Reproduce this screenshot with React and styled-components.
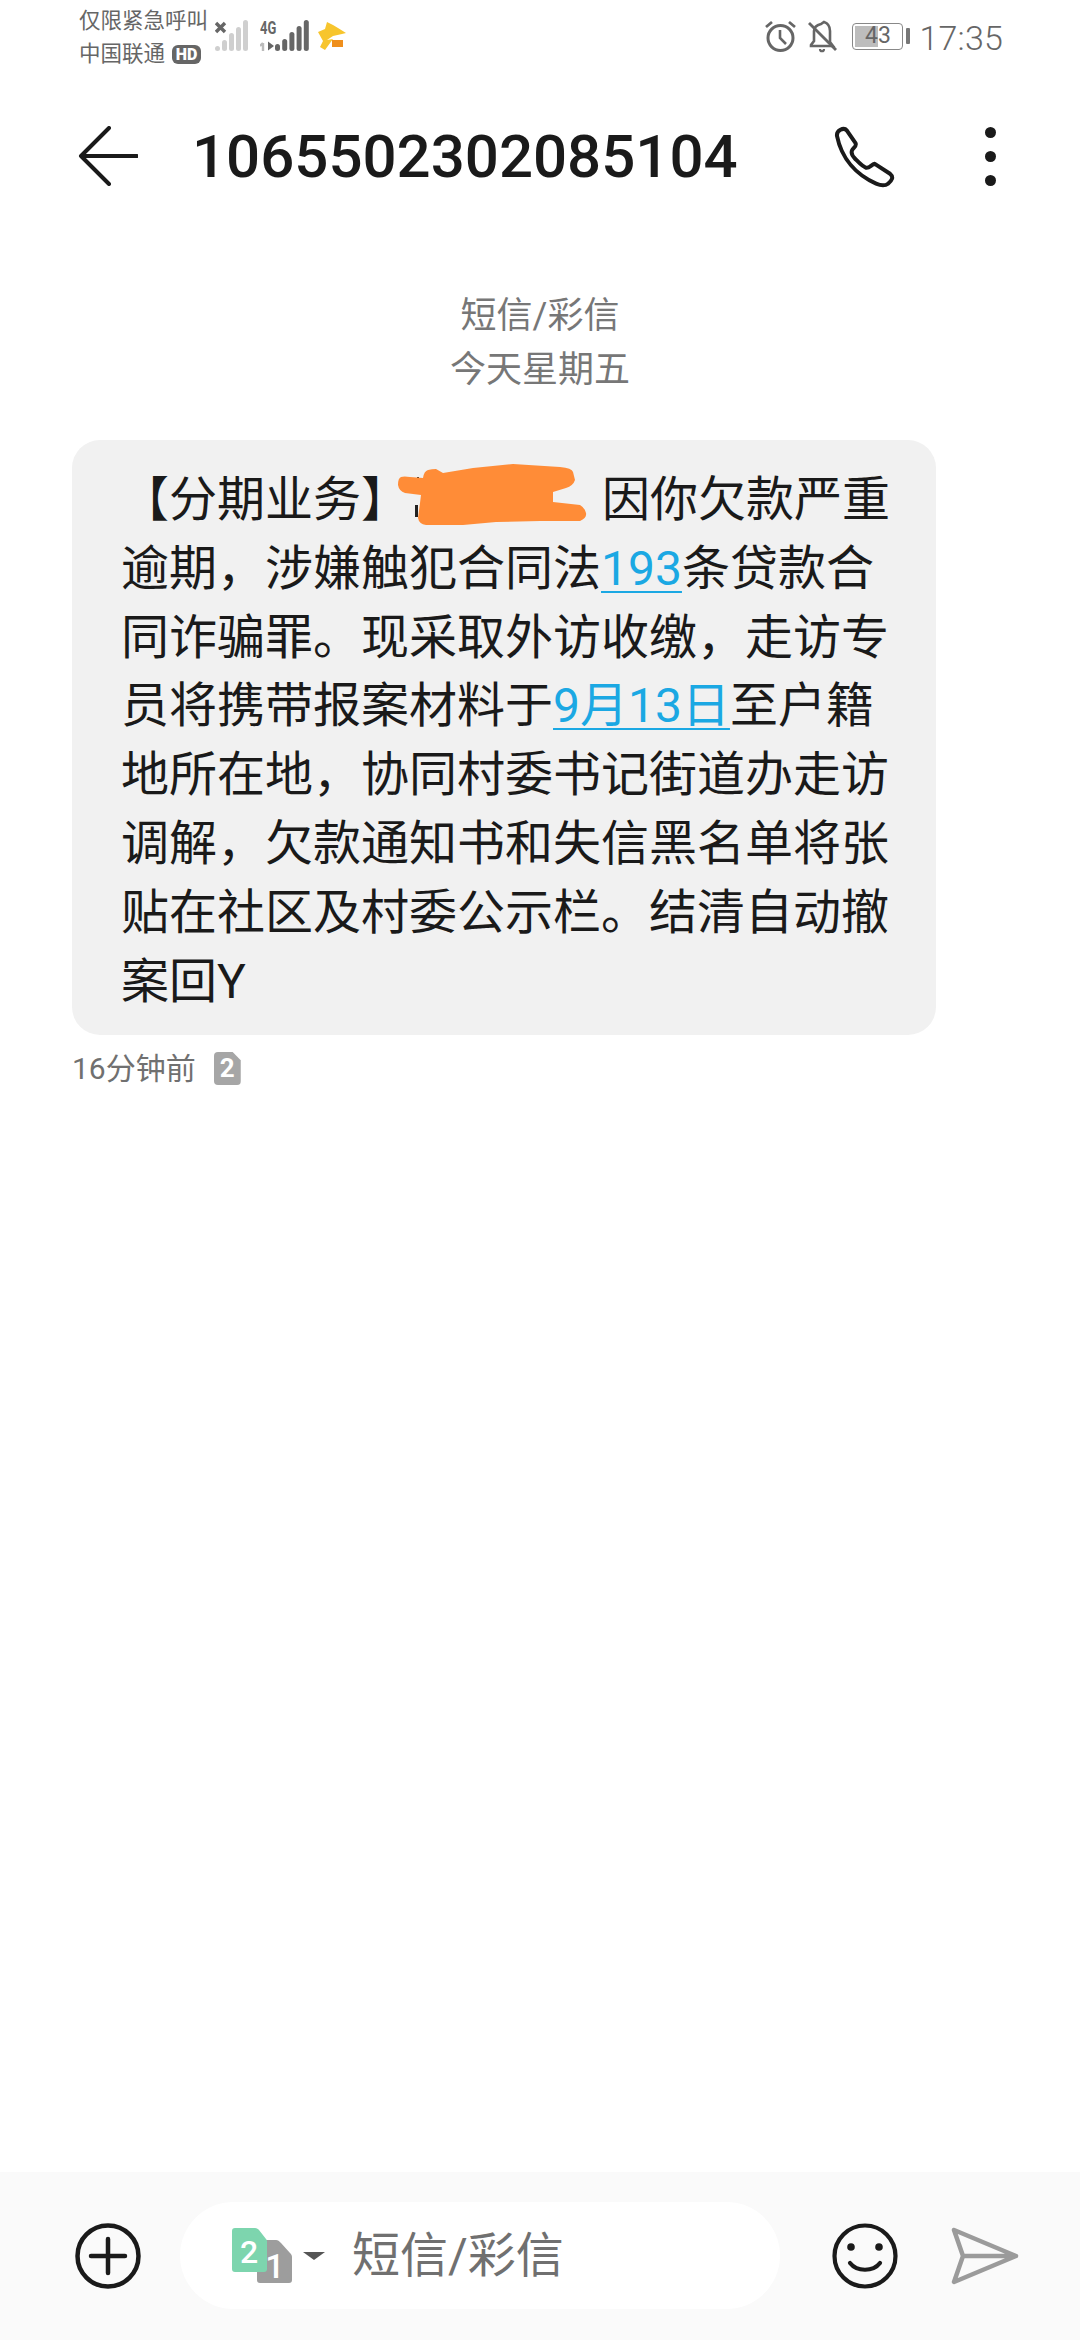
import React from 'react';
import styled, { createGlobalStyle } from 'styled-components';

const CJK = '"Roboto", "Noto Sans CJK SC", sans-serif';

const GlobalStyle = createGlobalStyle`
  html, body {
    margin: 0;
    padding: 0;
    background: #fff;
  }
  body {
    font-family: ${CJK};
  }
`;

const Screen = styled.div`
  width: 1080px;
  height: 2340px;
  display: flex;
  flex-direction: column;
  background: #fff;
  overflow: hidden;
`;

const StatusBar = styled.div`
  height: 72px;
  flex: none;
  display: flex;
  justify-content: space-between;
  padding: 0 77px 0 79px;
  color: #666;
`;

const StatusGroup = styled.div`
  display: flex;
  align-items: flex-start;
`;

const CarrierText = styled.div`
  font-size: 21.5px;
  line-height: 33px;
  padding-top: 4px;
  width: 136px;
  flex: none;
  white-space: nowrap;
`;

const HdBadge = styled.span`
  display: inline-block;
  vertical-align: 1px;
  margin-left: 7px;
  width: 29px;
  height: 19px;
  border-radius: 6px;
  background: #666;
  color: #fff;
  font-size: 16px;
  font-weight: 900;
  line-height: 19px;
  text-align: center;
`;

const StatusIcon = styled.svg`
  display: block;
  flex: none;
  margin-top: ${(p) => p.$top || 0}px;
  margin-left: ${(p) => p.$left || 0}px;
`;

const NetworkLabel = styled.div`
  width: 18px;
  margin: 19px 0 0 12px;
  flex: none;
  font-size: 18px;
  font-weight: 700;
  line-height: 18px;
  transform: scaleX(0.72);
  transform-origin: left top;
  white-space: nowrap;
`;

const Battery = styled.div`
  position: relative;
  flex: none;
  width: 51px;
  height: 27px;
  margin: 23px 0 0 14px;
  box-sizing: border-box;
  border: 1.5px solid #888;
  border-radius: 4px;
  font-size: 23px;
  line-height: 24px;
  text-align: center;
  overflow: hidden;
`;

const BatteryFill = styled.div`
  position: absolute;
  left: 2px;
  top: 2px;
  bottom: 2px;
  width: ${(p) => p.$level * 1.05}%;
  background: #bdbdbd;
`;

const BatteryValue = styled.span`
  position: relative;
`;

const BatteryTip = styled.div`
  flex: none;
  width: 4px;
  height: 16px;
  margin: 28px 0 0 3px;
  background: #777;
  border-radius: 1px;
`;

const Clock = styled.div`
  margin-left: 9px;
  font-size: 34px;
  font-weight: 300;
  line-height: 36px;
  padding-top: 20px;
  letter-spacing: 0.2px;
`;

const Header = styled.header`
  height: 168px;
  flex: none;
  display: flex;
  align-items: center;
  padding: 0 0 0 78px;
`;

const HeaderIcon = styled.svg`
  display: block;
  flex: none;
`;

const Title = styled.h1`
  flex: 1;
  margin: 2px 0 0 54px;
  color: #1a1a1a;
  font-size: 60px;
  font-weight: 500;
  line-height: 70px;
`;

const HeaderActions = styled.div`
  display: flex;
  align-items: center;
  gap: 89px;
  padding-right: 84px;
`;

const Dots = styled.div`
  display: flex;
  flex-direction: column;
  gap: 13px;
`;

const Dot = styled.span`
  display: block;
  width: 11px;
  height: 11px;
  border-radius: 50%;
  background: #1a1a1a;
`;

const Thread = styled.main`
  flex: 1;
  padding: 0 144px 0 72px;
`;

const DateBlock = styled.div`
  width: 1080px;
  margin: 49px 0 43px -72px;
  color: #777;
  font-size: 36px;
  line-height: 54px;
  text-align: center;
`;

const Bubble = styled.div`
  box-sizing: border-box;
  width: 864px;
  height: 595px;
  padding: 26px 0 0 49px;
  border-radius: 28px;
  background: #f1f1f1;
  color: #1a1a1a;
  font-size: 48px;
  line-height: 68.8px;
  white-space: nowrap;
`;

const MessageLink = styled.span`
  color: #1ba8e3;
  text-decoration: underline;
  text-decoration-thickness: 2px;
  text-underline-offset: 6px;
`;

const Redaction = styled.span`
  position: relative;
  display: inline-block;
  width: 193px;
  height: 1em;
  vertical-align: -4px;
`;

const RedactionBlob = styled.svg`
  position: absolute;
  left: -12px;
  top: -8px;
`;

const MessageMeta = styled.div`
  display: flex;
  align-items: center;
  height: 33px;
  margin-top: 17px;
  color: #707070;
  font-size: 30px;
  line-height: 33px;
`;

const SimBadge = styled.span`
  display: block;
  margin-left: 18px;
  width: 27px;
  height: 33px;
  clip-path: polygon(0 0, 70% 0, 100% 25%, 100% 100%, 0 100%);
  border-radius: 4px;
  background: #a6a6a6;
  color: #fff;
  font-size: 26px;
  font-weight: 700;
  line-height: 33px;
  text-align: center;
`;

const Composer = styled.footer`
  height: 168px;
  flex: none;
  box-sizing: border-box;
  display: flex;
  align-items: flex-start;
  padding-top: 30px;
  background: #fafafa;
`;

const ComposerIconSlot = styled.div`
  flex: none;
  display: flex;
  align-items: center;
  height: 107px;
  margin-left: ${(p) => p.$left}px;
`;

const InputPill = styled.div`
  flex: none;
  display: flex;
  align-items: center;
  box-sizing: border-box;
  width: 600px;
  height: 107px;
  margin-left: 39px;
  padding-left: 52px;
  border-radius: 54px;
  background: #fff;
`;

const SimSwitch = styled.svg`
  display: block;
  flex: none;
  overflow: visible;
`;

const Caret = styled.span`
  flex: none;
  width: 0;
  height: 0;
  margin: 0 0 0 11px;
  border-left: 11px solid transparent;
  border-right: 11px solid transparent;
  border-top: 8px solid #555;
`;

const Placeholder = styled.div`
  margin-left: 27px;
  color: #707070;
  font-size: 48px;
  line-height: 60px;
`;

const SignalBars = ({ color, heights, x = 0, barWidth = 5, gap = 3.3 }) => (
  <>
    {heights.map((h, i) => (
      <rect
        key={i}
        x={x + i * (barWidth + gap)}
        y={31 - h}
        width={barWidth}
        height={h}
        rx={2.5}
        fill={color}
      />
    ))}
  </>
);

export default function App() {
  return (
    <Screen>
      <GlobalStyle />
      <StatusBar>
        <StatusGroup>
          <CarrierText>
            仅限紧急呼叫
            <br />
            中国联通<HdBadge>HD</HdBadge>
          </CarrierText>
          <StatusIcon width="33" height="32" viewBox="0 0 33 32" $top={20}>
            <path d="M1 3l9 9M10 3l-9 9" stroke="#666" strokeWidth="3.4" />
            <SignalBars color="#cfcfcf" heights={[5, 11, 18, 24, 31]} x={0} barWidth={5} gap={2} />
          </StatusIcon>
          <NetworkLabel>4G</NetworkLabel>
          <StatusIcon width="50" height="32" viewBox="0 0 50 32" $top={20} $left={-18}>
            <path d="M3 31V23M3 23l-3 3" stroke="#bbb" strokeWidth="2.4" fill="none" />
            <path d="M8 21.5v9l6-4.5z" fill="#666" />
            <SignalBars color="#666" heights={[7, 12, 19, 25, 31]} x={15} barWidth={5} gap={2.2} />
          </StatusIcon>
          <StatusIcon width="28" height="30" viewBox="0 0 28 30" $top={21} $left={8}>
            <path d="M9 1l6 3 5 3 8 5-4 1-9 2-6 4 6-1-8 11-5-3 3-6-5-9 7-3z" fill="#f7c52d" />
            <path d="M14 19h11v7H14z" fill="#ef8f1c" />
          </StatusIcon>
        </StatusGroup>
        <StatusGroup>
          <StatusIcon width="31" height="33" viewBox="0 0 31 33" $top={20} fill="none" stroke="#666">
            <circle cx="15.5" cy="18" r="12.5" strokeWidth="3" />
            <path d="M15 10v8l6 6" strokeWidth="2.6" />
            <path d="M1 7l6-5M30 7l-6-5" strokeWidth="2.8" />
          </StatusIcon>
          <StatusIcon width="30" height="33" viewBox="0 0 30 33" $top={20} $left={12} fill="none" stroke="#666">
            <path d="M6 11v10l-3 4v1h22l-3-4V11c0-5-3-8-6-9l-3 2c-4 1-7 3-7 7z" strokeWidth="2.6" />
            <path d="M12 29c0 3 4 3 4 0" strokeWidth="2.2" />
            <path d="M1 3l27 27" strokeWidth="2.8" />
          </StatusIcon>
          <Battery>
            <BatteryFill $level={43} />
            <BatteryValue>43</BatteryValue>
          </Battery>
          <BatteryTip />
          <Clock>17:35</Clock>
        </StatusGroup>
      </StatusBar>

      <Header>
        <HeaderIcon width="60" height="60" viewBox="0 0 60 60" fill="none" stroke="#1a1a1a" strokeWidth="4" strokeLinecap="round" strokeLinejoin="round">
          <path d="M31 2L3 30l28 28M3 30h56" />
        </HeaderIcon>
        <Title>1065502302085104</Title>
        <HeaderActions>
          <HeaderIcon width="63" height="63" viewBox="40 25 190 190" fill="none" stroke="#1a1a1a" strokeWidth="12" strokeLinejoin="round">
            <path d="M52 58C50 42 72 30 82 42L108 80C112 88 104 92 98 100C94 108 98 118 106 126C116 136 128 150 140 154C150 156 156 144 166 142L212 172C224 182 218 192 206 202C196 210 184 208 170 202C112 176 66 128 52 58Z" />
          </HeaderIcon>
          <Dots>
            <Dot />
            <Dot />
            <Dot />
          </Dots>
        </HeaderActions>
      </Header>

      <Thread>
        <DateBlock>
          短信/彩信
          <br />
          今天星期五
        </DateBlock>
        <Bubble>
          【分期业务】
          <Redaction>
            <RedactionBlob width="190" height="62" viewBox="0 0 190 62">
              <path d="M18 41h3v12h-3zM20 13h2v4h-2z" fill="#222" />
              <path
                d="M1 21Q1 14 4 13T13 13L26 14Q27 7 31 6T39 5L46 9 76 4 116 0 163 3Q175 4 176 8T178 16Q176 22 169 24L156 28 156 38 183 41Q188 44 189 49T183 57L143 57 99 58 66 61 29 61Q22 60 21 54L23 39 24 31 8 29Q2 27 1 21Z"
                fill="#ff8c37"
              />
            </RedactionBlob>
          </Redaction>
          因你欠款严重
          <br />
          逾期，涉嫌触犯合同法<MessageLink>193</MessageLink>条贷款合
          <br />
          同诈骗罪。现采取外访收缴，走访专
          <br />
          员将携带报案材料于<MessageLink>9月13日</MessageLink>至户籍
          <br />
          地所在地，协同村委书记街道办走访
          <br />
          调解，欠款通知书和失信黑名单将张
          <br />
          贴在社区及村委公示栏。结清自动撤
          <br />
          案回Y
        </Bubble>
        <MessageMeta>
          16分钟前
          <SimBadge>2</SimBadge>
        </MessageMeta>
      </Thread>

      <Composer>
        <ComposerIconSlot $left={75}>
          <svg width="66" height="66" viewBox="0 0 66 66" fill="none" stroke="#1a1a1a" strokeWidth="4.5" strokeLinecap="round">
            <circle cx="33" cy="33" r="30.5" />
            <path d="M33 16v34M16 33h34" />
          </svg>
        </ComposerIconSlot>
        <InputPill>
          <SimSwitch width="60" height="55" viewBox="0 0 60 55">
            <path d="M28 12h16c2 0 3 1 5 3l9 10c1 1 2 2 2 4v23c0 2-1 3-3 3H28c-2 0-3-1-3-3V15c0-2 1-3 3-3z" fill="#9d9d9d" />
            <text x="43" y="50" fontSize="34" fontWeight="500" fill="#fff" textAnchor="middle" fontFamily="Roboto, sans-serif">1</text>
            <path d="M3 0h20c2 0 3 1 4 2l7 9c1 1 1 2 1 3v27c0 2-1 3-3 3H3c-2 0-3-1-3-3V3c0-2 1-3 3-3z" fill="#7dd5ae" />
            <text x="17" y="35" fontSize="32" fontWeight="500" fill="#fff" textAnchor="middle" fontFamily="Roboto, sans-serif">2</text>
          </SimSwitch>
          <Caret />
          <Placeholder>短信/彩信</Placeholder>
        </InputPill>
        <ComposerIconSlot $left={52}>
          <svg width="66" height="66" viewBox="0 0 66 66" fill="none" stroke="#1a1a1a" strokeWidth="4.2" strokeLinecap="round">
            <circle cx="33" cy="33" r="30.5" />
            <circle cx="19" cy="24" r="3.8" fill="#1a1a1a" stroke="none" />
            <circle cx="47" cy="24" r="3.8" fill="#1a1a1a" stroke="none" />
            <path d="M18 40c7 9 23 9 30 0" />
          </svg>
        </ComposerIconSlot>
        <ComposerIconSlot $left={53}>
          <svg width="68" height="58" viewBox="0 0 68 58" fill="none" stroke="#9b9b9b" strokeWidth="4.5" strokeLinecap="round" strokeLinejoin="round">
            <path d="M3 3l62 26L3 55l9-26zM12 29h53" />
          </svg>
        </ComposerIconSlot>
      </Composer>
    </Screen>
  );
}
